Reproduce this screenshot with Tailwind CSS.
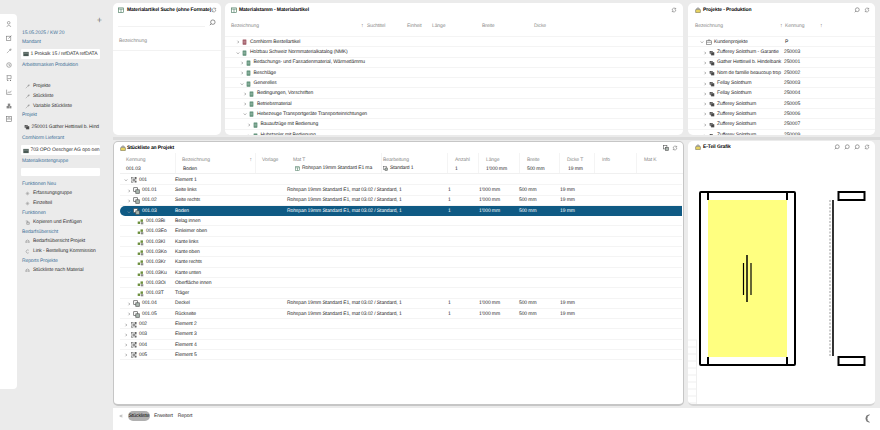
<!DOCTYPE html>
<html lang="de">
<head>
  <meta charset="UTF-8">
  <title>Stückliste an Projekt</title>
  <script src="https://cdn.jsdelivr.net/npm/@tailwindcss/browser@4"></script>
</head>
<body class="m-0">
<svg width="0" height="0" class="absolute">
  <symbol id="cr" viewBox="0 0 8 8"><path d="M3 1.500 5.500 4 3 6.500" fill="none" stroke="#555" stroke-width="1"/></symbol>
  <symbol id="cd" viewBox="0 0 8 8"><path d="M1.500 3 4 5.500 6.500 3" fill="none" stroke="#555" stroke-width="1"/></symbol>
  <symbol id="bag" viewBox="0 0 10 10"><path d="M3 4V2.500Q5 .5 7 2.500V4" fill="none" stroke="#444" stroke-width="1"/><rect x="1" y="4" width="8" height="5.500" rx=".8" fill="#e6d260" stroke="#555" stroke-width=".8"/></symbol>
  <symbol id="tbl" viewBox="0 0 10 10"><rect x="1" y="1.500" width="8" height="7.500" fill="#fff" stroke="#3f7357" stroke-width="1"/><path d="M1 3.500H9M5 3.500V9" stroke="#3f7357" stroke-width="1"/></symbol>
  <symbol id="gb" viewBox="0 0 6 8"><rect x=".5" y=".5" width="5" height="7" rx=".6" fill="#5f9078"/><path d="M1.500 3H4.500M1.500 5H4.500" stroke="#d5e4dc" stroke-width=".6"/></symbol>
  <symbol id="rb" viewBox="0 0 6 8"><rect x=".5" y=".5" width="5" height="7" rx=".6" fill="#a05a66"/><path d="M1.500 3H4.500M1.500 5H4.500" stroke="#e6ccd0" stroke-width=".6"/></symbol>
  <symbol id="prj" viewBox="0 0 10 10"><rect x="1" y="1.500" width="5.500" height="5" rx="1" fill="#555"/><rect x="3" y="3.500" width="6" height="5.500" rx="1" fill="#444" stroke="#fff" stroke-width=".6"/></symbol>
  <symbol id="kp" viewBox="0 0 10 10"><path d="M3.500 3V1.500H6.500V3" fill="none" stroke="#555" stroke-width=".8"/><rect x="1" y="3" width="8" height="6" fill="none" stroke="#555" stroke-width=".9"/><path d="M1 5.500H9" stroke="#555" stroke-width=".8"/></symbol>
  <symbol id="pt" viewBox="0 0 10 10"><rect x="1" y="1" width="5.500" height="5.500" fill="#fff" stroke="#555" stroke-width="1"/><rect x="4" y="4" width="5" height="5" fill="#aab8b0" stroke="#555" stroke-width="1"/></symbol>
  <symbol id="el" viewBox="0 0 10 10"><path d="M2.500 2.500 7.500 7.500M7.500 2.500 2.500 7.500" stroke="#555" stroke-width="1"/><g fill="#fff" stroke="#555" stroke-width=".8"><rect x="1" y="1" width="2.500" height="2.500"/><rect x="6.500" y="1" width="2.500" height="2.500"/><rect x="1" y="6.500" width="2.500" height="2.500"/><rect x="6.500" y="6.500" width="2.500" height="2.500"/></g></symbol>
  <symbol id="lf" viewBox="0 0 10 10"><rect x="1" y="5" width="3.500" height="3.500" fill="#6c8f3c"/><rect x="5" y="2" width="3.500" height="3.500" fill="#6c8f3c"/><rect x="5.500" y="6" width="3.500" height="3" fill="#888"/></symbol>
  <symbol id="rf" viewBox="0 0 10 10"><path d="M2 5A3 3 0 0 1 7.500 3.200M8 5A3 3 0 0 1 2.500 6.800" fill="none" stroke="#555" stroke-width=".8"/><path d="M7.800 1.500V3.500H5.800M2.200 8.500V6.500H4.200" fill="none" stroke="#555" stroke-width=".8"/></symbol>
  <symbol id="sr" viewBox="0 0 10 10"><circle cx="5.500" cy="4.500" r="3.200" fill="none" stroke="#555" stroke-width=".9"/><path d="M3.200 6.800 1.200 8.800" stroke="#555" stroke-width="1"/></symbol>
  <symbol id="wr" viewBox="0 0 10 10"><path d="M1.500 8.500 6 4M6 4Q5.500 1.800 8 1.500L6.800 3 7.300 3.500 8.800 2.300Q8.500 4.800 6 4" fill="none" stroke="#888" stroke-width=".9"/></symbol>
  <symbol id="gr" viewBox="0 0 10 10"><circle cx="5" cy="5" r="2" fill="#aaa"/><path d="M5 1V9M1 5H9M2.200 2.200 7.800 7.800M7.800 2.200 2.200 7.800" stroke="#aaa" stroke-width=".8"/></symbol>
  <symbol id="cp" viewBox="0 0 10 10"><path d="M1.500 2H5.500V5M3.500 4.500H8.500V8.500H3.500Z" fill="none" stroke="#666" stroke-width=".9"/></symbol>
  <symbol id="cart" viewBox="0 0 10 10"><path d="M2 8V3.500Q5 .5 8 3.500V8M1.500 6H8.500" fill="none" stroke="#777" stroke-width=".9"/></symbol>
  <symbol id="lnk" viewBox="0 0 10 10"><path d="M7.500 2.500A3.200 3.200 0 1 0 7.500 7.500" fill="none" stroke="#777" stroke-width=".9"/></symbol>
  <symbol id="sheet" viewBox="0 0 10 10"><rect x=".5" y="1.500" width="9" height="7" fill="#4a5a55"/><path d="M1.500 3.500H8.500" stroke="#cfd8d4" stroke-width=".7"/></symbol>
</svg>

<div class="w-[880px] h-[430px] overflow-hidden flex bg-[#ebebeb] text-[5px] tracking-[-0.1px] leading-none text-[#2a2a2a] [text-rendering:geometricPrecision] font-['Liberation_Sans',Arial,sans-serif]">

  <!-- icon rail -->
  <div class="w-[17px] h-[375px] mt-[14px] shrink-0 bg-white rounded-r-[4px] flex flex-col items-center pt-[7px] pl-[1px] gap-[7.600px]">
    <svg class="w-[6px] h-[6px]" viewBox="0 0 10 10"><circle cx="4.500" cy="3" r="2.200" fill="none" stroke="#777"/><path d="M1 9.500Q4.500 4.500 8.500 9.500" fill="none" stroke="#777"/></svg>
    <svg class="w-[6px] h-[6px]" viewBox="0 0 10 10"><rect x="1" y="2" width="7" height="7" fill="none" stroke="#777"/><path d="M4 6 9 1" stroke="#777"/></svg>
    <svg class="w-[6px] h-[6px]"><use href="#wr"/></svg>
    <svg class="w-[6px] h-[6px]" viewBox="0 0 10 10"><circle cx="5" cy="5" r="3.800" fill="none" stroke="#777"/><path d="M5 3V5.500H7" fill="none" stroke="#777"/></svg>
    <svg class="w-[6px] h-[6px]" viewBox="0 0 10 10"><path d="M1 1H8.500V6H2.500M2 1V8.500" fill="none" stroke="#777"/><circle cx="3" cy="9" r="1" fill="#777"/><circle cx="7.500" cy="9" r="1" fill="#777"/></svg>
    <svg class="w-[6px] h-[6px]" viewBox="0 0 10 10"><path d="M1 1V9H9.500M2.500 7 5 4.500 6.500 6 9 3" fill="none" stroke="#777"/></svg>
    <svg class="w-[6px] h-[6px]" viewBox="0 0 10 10"><rect x="3" y="1" width="4" height="4" fill="#888"/><rect x="1" y="5" width="4" height="4" fill="#888"/><rect x="5.500" y="5" width="3.500" height="4" fill="#888"/></svg>
    <svg class="w-[6px] h-[6px]" viewBox="0 0 10 10"><rect x="1" y="1" width="8" height="8" fill="none" stroke="#777"/><path d="M1 5H9M3 3H7" stroke="#777"/></svg>
  </div>

  <!-- sidebar -->
  <div class="w-[96px] shrink-0 flex flex-col pl-[5px] pr-[13px] pt-[16px] text-[#333] whitespace-nowrap">
    <div class="h-[8px] flex justify-end text-[#777] text-[9px] leading-[8px] -mr-[2px]">+</div>
    <div class="h-[9px] mt-[5px] flex items-center text-[#3f7198]">15.05.2025 / KW 20</div>
    <div class="h-[9px] flex items-center text-[#3f7198]">Mandant</div>
    <div class="h-[10px] mt-[1.500px] -ml-[1px] w-[79px] bg-white rounded-[1px] flex items-center pl-[2px] pt-[1px] gap-[1.500px]"><svg class="w-[6px] h-[6px] shrink-0"><use href="#sheet"/></svg>1 Prokalk 15 / refDATA refDATA</div>
    <div class="h-[9px] mt-[2.500px] flex items-center text-[#3f7198]">Arbeitsmasken Produktion</div>

    <div class="h-[9.700px] mt-[12px] flex items-center pl-[3px] gap-[3px]"><svg class="w-[5px] h-[5px]"><use href="#wr"/></svg>Projekte</div>
    <div class="h-[9.700px] flex items-center pl-[3px] gap-[3px]"><svg class="w-[5px] h-[5px]"><use href="#wr"/></svg>Stückliste</div>
    <div class="h-[9.700px] flex items-center pl-[3px] gap-[3px]"><svg class="w-[5px] h-[5px]"><use href="#wr"/></svg>Variable Stückliste</div>
    <div class="h-[9.300px] flex items-center text-[#3f7198]">Projekt</div>
    <div class="h-[10px] mt-[2px] flex items-center pl-[2px] gap-[1.500px] w-[79px]"><svg class="w-[6px] h-[6px] shrink-0"><use href="#prj"/></svg>250001 Gather Hettiswil b. Hind</div>
    <div class="h-[9px] mt-[1.500px] flex items-center text-[#3f7198]">ComNorm Lieferant</div>
    <div class="h-[10px] mt-[2.500px] -ml-[1px] w-[79px] bg-white rounded-[1px] flex items-center pl-[2px] pt-[1px] gap-[1.500px]"><svg class="w-[6px] h-[6px] shrink-0"><use href="#sheet"/></svg>703 OPO Oeschger AG opo oen</div>
    <div class="h-[9px] mt-[1.500px] flex items-center text-[#3f7198]">Materialkostengruppe</div>
    <div class="h-[8px] mt-[2px] -ml-[1px] w-[79px] bg-white rounded-[1px]"></div>
    <div class="h-[9px] mt-[4px] flex items-center text-[#3f7198]">Funktionen Neu</div>
    <div class="h-[9.800px] flex items-center pl-[3px] gap-[3px]"><svg class="w-[5px] h-[5px]"><use href="#gr"/></svg>Erfassungsgruppe</div>
    <div class="h-[9.800px] flex items-center pl-[3px] gap-[3px]"><svg class="w-[5px] h-[5px]"><use href="#gr"/></svg>Einzelteil</div>
    <div class="h-[9.400px] flex items-center text-[#3f7198]">Funktionen</div>
    <div class="h-[9.800px] flex items-center pl-[3px] gap-[3px]"><svg class="w-[5px] h-[5px]"><use href="#cp"/></svg>Kopieren und Einfügen</div>
    <div class="h-[9.400px] flex items-center text-[#3f7198]">Bedarfsübersicht</div>
    <div class="h-[9.800px] flex items-center pl-[3px] gap-[3px]"><svg class="w-[5px] h-[5px]"><use href="#cart"/></svg>Bedarfsübersicht Projekt</div>
    <div class="h-[9.800px] flex items-center pl-[3px] gap-[3px]"><svg class="w-[5px] h-[5px]"><use href="#lnk"/></svg>Link - Bestellung Kommission</div>
    <div class="h-[9.400px] flex items-center text-[#3f7198]">Reports Projekte</div>
    <div class="h-[9.800px] flex items-center pl-[3px] gap-[3px]"><svg class="w-[5px] h-[5px]"><use href="#cart"/></svg>Stückliste nach Material</div>
  </div>

  <!-- main -->
  <div class="w-[767px] shrink-0 flex flex-col">

    <!-- top panels -->
    <div class="h-[135px] pt-[3px] flex">
      <div class="w-[108px] h-[132px] bg-white rounded-[5px] overflow-hidden">
        <div class="h-[14px] pl-[5px] pr-[6px] flex items-center font-bold text-black whitespace-nowrap"><svg class="w-[6px] h-[6px] shrink-0 mr-[3px]"><use href="#tbl"/></svg><span class="grow">Materialartikel Suche (ohne Formate)</span><svg class="w-[6px] h-[6px] shrink-0"><use href="#rf"/></svg></div>
        <div class="h-[10px] flex justify-between items-center pl-[5px] pr-[5px]"><div class="w-[87px] h-[9px] border-b border-[#f2f2f2]"></div><svg class="w-[7px] h-[7px]"><use href="#sr"/></svg></div>
        <div class="h-[24px] pl-[6px] pt-[12px] text-[#8a8a8a] border-b border-[#f2f2f2]">Bezeichnung</div>
      </div>

      <div class="w-[458px] h-[132px] ml-[4px] bg-white rounded-[5px] overflow-hidden">
        <div class="h-[14px] pl-[6px] pr-[6px] flex items-center justify-between font-bold text-black"><span class="flex items-center gap-[2px]"><svg class="w-[6px] h-[6px]"><use href="#tbl"/></svg>Materialstamm - Materialartikel</span><svg class="w-[6px] h-[6px]"><use href="#rf"/></svg></div>
        <div class="h-[20px] pl-[6px] flex items-center text-[#8a8a8a] border-b border-[#f4f4f4]">
          <span class="w-[130px]">Bezeichnung</span><span class="w-[6px] text-[#666]">↑</span><span class="w-[40px]">Suchtitel</span><span class="w-[25px]">Einheit</span><span class="w-[50px]">Länge</span><span class="w-[52px]">Breite</span><span>Dicke</span>
        </div>
        <div class="flex items-center h-[10.300px] pt-[1.500px] pl-[11px] border-b border-[#f4f4f4]"><svg class="w-[4px] h-[4px] mr-[2px]"><use href="#cr"/></svg><svg class="w-[5px] h-[6px] mr-[3px]"><use href="#rb"/></svg>ComNorm Bestellartikel</div>
        <div class="flex items-center h-[10.300px] pt-[1.500px] pl-[11px] border-b border-[#f4f4f4]"><svg class="w-[4px] h-[4px] mr-[2px]"><use href="#cd"/></svg><svg class="w-[5px] h-[6px] mr-[3px]"><use href="#gb"/></svg>Holzbau Schweiz Normmaterialkatalog (NMK)</div>
        <div class="flex items-center h-[10.300px] pt-[1.500px] pl-[14.500px] border-b border-[#f4f4f4]"><svg class="w-[4px] h-[4px] mr-[2px]"><use href="#cr"/></svg><svg class="w-[5px] h-[6px] mr-[3px]"><use href="#gb"/></svg>Bedachungs- und Fassadenmaterial, Wärmedämmu</div>
        <div class="flex items-center h-[10.300px] pt-[1.500px] pl-[14.500px] border-b border-[#f4f4f4]"><svg class="w-[4px] h-[4px] mr-[2px]"><use href="#cr"/></svg><svg class="w-[5px] h-[6px] mr-[3px]"><use href="#gb"/></svg>Beschläge</div>
        <div class="flex items-center h-[10.300px] pt-[1.500px] pl-[14.500px] border-b border-[#f4f4f4]"><svg class="w-[4px] h-[4px] mr-[2px]"><use href="#cd"/></svg><svg class="w-[5px] h-[6px] mr-[3px]"><use href="#gb"/></svg>Generelles</div>
        <div class="flex items-center h-[10.300px] pt-[1.500px] pl-[18px] border-b border-[#f4f4f4]"><svg class="w-[4px] h-[4px] mr-[2px]"><use href="#cr"/></svg><svg class="w-[5px] h-[6px] mr-[3px]"><use href="#gb"/></svg>Bedingungen, Vorschriften</div>
        <div class="flex items-center h-[10.300px] pt-[1.500px] pl-[18px] border-b border-[#f4f4f4]"><svg class="w-[4px] h-[4px] mr-[2px]"><use href="#cr"/></svg><svg class="w-[5px] h-[6px] mr-[3px]"><use href="#gb"/></svg>Betriebsmaterial</div>
        <div class="flex items-center h-[10.300px] pt-[1.500px] pl-[18px] border-b border-[#f4f4f4]"><svg class="w-[4px] h-[4px] mr-[2px]"><use href="#cd"/></svg><svg class="w-[5px] h-[6px] mr-[3px]"><use href="#gb"/></svg>Hebezeuge Transportgeräte Transporteinrichtungen</div>
        <div class="flex items-center h-[10.300px] pt-[1.500px] pl-[21.500px] border-b border-[#f4f4f4]"><svg class="w-[4px] h-[4px] mr-[2px]"><use href="#cr"/></svg><svg class="w-[5px] h-[6px] mr-[3px]"><use href="#gb"/></svg>Bauaufzüge mit Bedienung</div>
        <div class="flex items-center h-[10.300px] pt-[1.500px] pl-[21.500px]"><svg class="w-[4px] h-[4px] mr-[2px]"><use href="#cr"/></svg><svg class="w-[5px] h-[6px] mr-[3px]"><use href="#gb"/></svg>Hubstapler mit Bedienung</div>
      </div>

      <div class="w-[187px] h-[132px] ml-[5px] bg-white rounded-[5px] overflow-hidden">
        <div class="h-[14px] pl-[7px] pr-[5px] flex items-center justify-between font-bold text-black"><span class="flex items-center gap-[2px]"><svg class="w-[6px] h-[6px]"><use href="#bag"/></svg>Projekte - Produktion</span><span class="flex gap-[4px]"><svg class="w-[6px] h-[6px]"><use href="#sr"/></svg><svg class="w-[6px] h-[6px]"><use href="#rf"/></svg></span></div>
        <div class="h-[20px] pl-[7px] flex items-center text-[#8a8a8a] border-b border-[#f4f4f4]"><span class="w-[85px]">Bezeichnung</span><span class="w-[5px] text-[#666]">↑</span><span class="w-[35px]">Kennung</span><span class="text-[#666]">↑</span></div>
        <div class="flex items-center h-[10.300px] pt-[1.500px] pl-[12px] border-b border-[#f4f4f4]"><svg class="w-[4px] h-[4px] mr-[2px] shrink-0"><use href="#cd"/></svg><svg class="w-[6px] h-[6px] mr-[2px] shrink-0"><use href="#kp"/></svg><span class="w-[71px]">Kundenprojekte</span><span>P</span></div>
        <div class="flex items-center h-[10.300px] pt-[1.500px] pl-[15px] border-b border-[#f4f4f4]"><svg class="w-[4px] h-[4px] mr-[2px] shrink-0"><use href="#cr"/></svg><svg class="w-[6px] h-[6px] mr-[2px] shrink-0"><use href="#prj"/></svg><span class="w-[67px] whitespace-nowrap">Zufferey Solothurn - Garantie</span><span>250003</span></div>
        <div class="flex items-center h-[10.300px] pt-[1.500px] pl-[15px] border-b border-[#f4f4f4]"><svg class="w-[4px] h-[4px] mr-[2px] shrink-0"><use href="#cr"/></svg><svg class="w-[6px] h-[6px] mr-[2px] shrink-0"><use href="#prj"/></svg><span class="w-[67px] whitespace-nowrap">Gather Hettiswil b. Hindelbank</span><span>250001</span></div>
        <div class="flex items-center h-[10.300px] pt-[1.500px] pl-[15px] border-b border-[#f4f4f4]"><svg class="w-[4px] h-[4px] mr-[2px] shrink-0"><use href="#cr"/></svg><svg class="w-[6px] h-[6px] mr-[2px] shrink-0"><use href="#prj"/></svg><span class="w-[67px] whitespace-nowrap">Nom de famille beaucoup trop</span><span>250002</span></div>
        <div class="flex items-center h-[10.300px] pt-[1.500px] pl-[15px] border-b border-[#f4f4f4]"><svg class="w-[4px] h-[4px] mr-[2px] shrink-0"><use href="#cr"/></svg><svg class="w-[6px] h-[6px] mr-[2px] shrink-0"><use href="#prj"/></svg><span class="w-[67px]">Fellay Solothurn</span><span>250003</span></div>
        <div class="flex items-center h-[10.300px] pt-[1.500px] pl-[15px] border-b border-[#f4f4f4]"><svg class="w-[4px] h-[4px] mr-[2px] shrink-0"><use href="#cr"/></svg><svg class="w-[6px] h-[6px] mr-[2px] shrink-0"><use href="#prj"/></svg><span class="w-[67px]">Fellay Solothurn</span><span>250004</span></div>
        <div class="flex items-center h-[10.300px] pt-[1.500px] pl-[15px] border-b border-[#f4f4f4]"><svg class="w-[4px] h-[4px] mr-[2px] shrink-0"><use href="#cr"/></svg><svg class="w-[6px] h-[6px] mr-[2px] shrink-0"><use href="#prj"/></svg><span class="w-[67px]">Zufferey Solothurn</span><span>250005</span></div>
        <div class="flex items-center h-[10.300px] pt-[1.500px] pl-[15px] border-b border-[#f4f4f4]"><svg class="w-[4px] h-[4px] mr-[2px] shrink-0"><use href="#cr"/></svg><svg class="w-[6px] h-[6px] mr-[2px] shrink-0"><use href="#prj"/></svg><span class="w-[67px]">Zufferey Solothurn</span><span>250006</span></div>
        <div class="flex items-center h-[10.300px] pt-[1.500px] pl-[15px] border-b border-[#f4f4f4]"><svg class="w-[4px] h-[4px] mr-[2px] shrink-0"><use href="#cr"/></svg><svg class="w-[6px] h-[6px] mr-[2px] shrink-0"><use href="#prj"/></svg><span class="w-[67px]">Zufferey Solothurn</span><span>250007</span></div>
        <div class="flex items-center h-[10.300px] pt-[1.500px] pl-[15px]"><svg class="w-[4px] h-[4px] mr-[2px] shrink-0"><use href="#cr"/></svg><svg class="w-[6px] h-[6px] mr-[2px] shrink-0"><use href="#prj"/></svg><span class="w-[67px]">Zufferey Solothurn</span><span>250009</span></div>
      </div>
    </div>

    <!-- splitter -->
    <div class="h-[6px] flex items-center"><div class="w-full h-[3px] bg-[#dcdcdc]"></div></div>

    <!-- lower panels -->
    <div class="h-[265px] flex">
      <div class="w-[571px] bg-white rounded-[5px] border border-[#c6c6c6] border-b-2 overflow-hidden shrink-0">
        <div class="h-[11px] pl-[6px] pr-[5px] pt-[1px] flex items-center justify-between font-bold text-black"><span class="flex items-center gap-[1px]"><svg class="w-[6px] h-[6px]"><use href="#bag"/></svg>Stückliste an Projekt</span><span class="flex gap-[3px]"><svg class="w-[6px] h-[6px]"><use href="#pt"/></svg><svg class="w-[6px] h-[6px]"><use href="#rf"/></svg></span></div>
        <div class="h-[21px] ml-[6px] flex text-[#8a8a8a] border-b border-[#f0f0f0]">
          <div class="w-[56px] pl-[6px] pt-[5px] border-r border-[#f4f4f4]">Kennung<div class="text-[#2a2a2a] mt-[4px]">001.03</div></div>
          <div class="w-[80px] pl-[6px] pt-[5px] border-r border-[#f4f4f4] flex justify-between pr-[3px]"><div>Bezeichnung<div class="text-[#2a2a2a] mt-[4px] ml-[1px]">Boden</div></div><span class="text-[#666]">↑</span></div>
          <div class="w-[36px] pl-[6px] pt-[5px]">Vorlage</div>
          <div class="w-[90px] pl-[1px] pt-[5px] border-r border-[#f4f4f4] whitespace-nowrap">Mat T<div class="text-[#2a2a2a] mt-[3px] flex items-center gap-[2px] ml-[2px]"><svg class="w-[5px] h-[5px]"><use href="#tbl"/></svg>Rohspan 19mm Standard E1 ma</div></div>
          <div class="w-[66px] pl-[1px] pt-[5px] border-r border-[#f4f4f4]">Bearbeitung<div class="text-[#2a2a2a] mt-[3px] flex items-center gap-[2px]"><svg class="w-[5px] h-[5px]"><use href="#pt"/></svg>Standard 1</div></div>
          <div class="w-[31px] pl-[7px] pt-[5px] border-r border-[#f4f4f4]">Anzahl<div class="text-[#2a2a2a] mt-[4px]">1</div></div>
          <div class="w-[41px] pl-[7px] pt-[5px] border-r border-[#f4f4f4]">Länge<div class="text-[#2a2a2a] mt-[4px]">1'000 mm</div></div>
          <div class="w-[40px] pl-[7px] pt-[5px] border-r border-[#f4f4f4]">Breite<div class="text-[#2a2a2a] mt-[4px]">500 mm</div></div>
          <div class="w-[35px] pl-[7px] pt-[5px] border-r border-[#f4f4f4]">Dicke T<div class="text-[#2a2a2a] mt-[4px] ml-[1px]">19 mm</div></div>
          <div class="w-[42px] pl-[7px] pt-[5px] border-r border-[#f4f4f4]">Info</div>
          <div class="pl-[7px] pt-[5px]">Mat K</div>
        </div>

        <div class="ml-[6px] mr-[1px] mt-[1px]">
          <div class="flex items-center h-[10.300px] pt-[1.500px] border-b border-[#f4f4f4]"><div class="w-[55px] flex items-center pl-[4px]"><svg class="w-[4px] h-[4px] mr-[3px]"><use href="#cd"/></svg><svg class="w-[6px] h-[6px] mr-[2px]"><use href="#el"/></svg>001</div>Element 1</div>
          <div class="grid grid-cols-[55px_112px_161px_31px_40px_41px_1fr] items-center h-[10.300px] pt-[1.500px] border-b border-[#f4f4f4]"><div class="flex items-center pl-[7px]"><svg class="w-[4px] h-[4px] mr-[2px]"><use href="#cr"/></svg><svg class="w-[7px] h-[7px] mr-[2px]"><use href="#pt"/></svg>001.01</div><div>Seite links</div><div>Rohspan 19mm Standard E1, mat 03.02 / Standard, 1</div><div>1</div><div>1'000 mm</div><div>500 mm</div><div>19 mm</div></div>
          <div class="grid grid-cols-[55px_112px_161px_31px_40px_41px_1fr] items-center h-[10.300px] pt-[1.500px] border-b border-[#f4f4f4]"><div class="flex items-center pl-[7px]"><svg class="w-[4px] h-[4px] mr-[2px]"><use href="#cr"/></svg><svg class="w-[7px] h-[7px] mr-[2px]"><use href="#pt"/></svg>001.02</div><div>Seite rechts</div><div>Rohspan 19mm Standard E1, mat 03.02 / Standard, 1</div><div>1</div><div>1'000 mm</div><div>500 mm</div><div>19 mm</div></div>
          <div class="grid grid-cols-[55px_112px_161px_31px_40px_41px_1fr] items-center h-[10.300px] pt-[1.500px] bg-[#0f5a84] text-white rounded-l-full"><div class="flex items-center pl-[7px]"><svg class="w-[4px] h-[4px] mr-[2px] invert"><use href="#cd"/></svg><svg class="w-[7px] h-[7px] mr-[2px]"><use href="#pt"/></svg>001.03</div><div>Boden</div><div>Rohspan 19mm Standard E1, mat 03.02 / Standard, 1</div><div>1</div><div>1'000 mm</div><div>500 mm</div><div>19 mm</div></div>
          <div class="flex items-center h-[10.300px] pt-[1.500px] border-b border-[#f4f4f4]"><div class="w-[55px] flex items-center pl-[17px]"><svg class="w-[7px] h-[7px] mr-[2px]"><use href="#lf"/></svg>001.03Bi</div>Belag innen</div>
          <div class="flex items-center h-[10.300px] pt-[1.500px] border-b border-[#f4f4f4]"><div class="w-[55px] flex items-center pl-[17px]"><svg class="w-[7px] h-[7px] mr-[2px]"><use href="#lf"/></svg>001.03Eo</div>Einleimer oben</div>
          <div class="flex items-center h-[10.300px] pt-[1.500px] border-b border-[#f4f4f4]"><div class="w-[55px] flex items-center pl-[17px]"><svg class="w-[7px] h-[7px] mr-[2px]"><use href="#lf"/></svg>001.03Kl</div>Kante links</div>
          <div class="flex items-center h-[10.300px] pt-[1.500px] border-b border-[#f4f4f4]"><div class="w-[55px] flex items-center pl-[17px]"><svg class="w-[7px] h-[7px] mr-[2px]"><use href="#lf"/></svg>001.03Ko</div>Kante oben</div>
          <div class="flex items-center h-[10.300px] pt-[1.500px] border-b border-[#f4f4f4]"><div class="w-[55px] flex items-center pl-[17px]"><svg class="w-[7px] h-[7px] mr-[2px]"><use href="#lf"/></svg>001.03Kr</div>Kante rechts</div>
          <div class="flex items-center h-[10.300px] pt-[1.500px] border-b border-[#f4f4f4]"><div class="w-[55px] flex items-center pl-[17px]"><svg class="w-[7px] h-[7px] mr-[2px]"><use href="#lf"/></svg>001.03Ku</div>Kante unten</div>
          <div class="flex items-center h-[10.300px] pt-[1.500px] border-b border-[#f4f4f4]"><div class="w-[55px] flex items-center pl-[17px]"><svg class="w-[7px] h-[7px] mr-[2px]"><use href="#lf"/></svg>001.03Oi</div>Oberfläche innen</div>
          <div class="flex items-center h-[10.300px] pt-[1.500px] border-b border-[#f4f4f4]"><div class="w-[55px] flex items-center pl-[17px]"><svg class="w-[7px] h-[7px] mr-[2px]"><use href="#lf"/></svg>001.03T</div>Träger</div>
          <div class="grid grid-cols-[55px_112px_161px_31px_40px_41px_1fr] items-center h-[10.300px] pt-[1.500px] border-b border-[#f4f4f4]"><div class="flex items-center pl-[7px]"><svg class="w-[4px] h-[4px] mr-[2px]"><use href="#cr"/></svg><svg class="w-[7px] h-[7px] mr-[2px]"><use href="#pt"/></svg>001.04</div><div>Deckel</div><div>Rohspan 19mm Standard E1, mat 03.02 / Standard, 1</div><div>1</div><div>1'000 mm</div><div>500 mm</div><div>19 mm</div></div>
          <div class="grid grid-cols-[55px_112px_161px_31px_40px_41px_1fr] items-center h-[10.300px] pt-[1.500px] border-b border-[#f4f4f4]"><div class="flex items-center pl-[7px]"><svg class="w-[4px] h-[4px] mr-[2px]"><use href="#cr"/></svg><svg class="w-[7px] h-[7px] mr-[2px]"><use href="#pt"/></svg>001.05</div><div>Rückseite</div><div>Rohspan 19mm Standard E1, mat 03.02 / Standard, 1</div><div>1</div><div>1'000 mm</div><div>500 mm</div><div>19 mm</div></div>
          <div class="flex items-center h-[10.300px] pt-[1.500px] border-b border-[#f4f4f4]"><div class="w-[55px] flex items-center pl-[4px]"><svg class="w-[4px] h-[4px] mr-[3px]"><use href="#cr"/></svg><svg class="w-[6px] h-[6px] mr-[2px]"><use href="#el"/></svg>002</div>Element 2</div>
          <div class="flex items-center h-[10.300px] pt-[1.500px] border-b border-[#f4f4f4]"><div class="w-[55px] flex items-center pl-[4px]"><svg class="w-[4px] h-[4px] mr-[3px]"><use href="#cr"/></svg><svg class="w-[6px] h-[6px] mr-[2px]"><use href="#el"/></svg>003</div>Element 3</div>
          <div class="flex items-center h-[10.300px] pt-[1.500px] border-b border-[#f4f4f4]"><div class="w-[55px] flex items-center pl-[4px]"><svg class="w-[4px] h-[4px] mr-[3px]"><use href="#cr"/></svg><svg class="w-[6px] h-[6px] mr-[2px]"><use href="#el"/></svg>004</div>Element 4</div>
          <div class="flex items-center h-[10.300px] pt-[1.500px] border-b border-[#f4f4f4]"><div class="w-[55px] flex items-center pl-[4px]"><svg class="w-[4px] h-[4px] mr-[3px]"><use href="#cr"/></svg><svg class="w-[6px] h-[6px] mr-[2px]"><use href="#el"/></svg>005</div>Element 5</div>
        </div>
      </div>

      <div class="w-[187px] ml-[4px] bg-white rounded-[5px] border-b-2 border-[#d4d4d4] relative overflow-hidden shrink-0">
        <div class="h-[11px] pl-[7px] pr-[5px] pt-[1px] flex items-center justify-between font-bold text-black"><span class="flex items-center gap-[2px]"><svg class="w-[6px] h-[6px]"><use href="#bag"/></svg>E-Teil Grafik</span><span class="flex gap-[4px]"><svg class="w-[6px] h-[6px]"><use href="#sr"/></svg><svg class="w-[6px] h-[6px]"><use href="#sr"/></svg><svg class="w-[6px] h-[6px]"><use href="#sr"/></svg><svg class="w-[6px] h-[6px]"><use href="#rf"/></svg></span></div>
        <!-- drawing: coordinates are page x-688 y-141 -->
        <svg class="absolute left-0 top-0" width="187" height="263" viewBox="0 0 187 263">
          <rect x="20" y="59" width="79" height="157" fill="#ffff80"/>
          <rect x="12" y="51" width="95" height="173" rx="1" fill="none" stroke="#000" stroke-width="2"/>
          <path d="M20 51V59M99 51V59M20 216V224M99 216V224" stroke="#000" stroke-width="2"/>
          <path d="M59 114V161" stroke="#000" stroke-width="1.500"/>
          <path d="M55.500 122V154M63 122V154" stroke="#000" stroke-width="1.200"/>
          <rect x="150.500" y="51" width="26" height="8" fill="#fff" stroke="#000" stroke-width="2"/>
          <rect x="150.500" y="216" width="26" height="8" fill="#fff" stroke="#000" stroke-width="2"/>
          <path d="M145 59V215" stroke="#000" stroke-width="1.600"/>
          <path d="M142 59V216" stroke="#999" stroke-width="1" stroke-dasharray="2 1.500"/>
          <path d="M0 199H9M0 206H9M0 213H9M0 220H9M0 227H9M0 234H9M0 241H9M0 248H9M0 255H9M0 262H9" stroke="#efefef" stroke-width="1"/>
          <path d="M8.500 199V263" stroke="#efefef" stroke-width="1"/>
        </svg>
      </div>
    </div>

    <!-- bottom tabs -->
    <div class="h-[22px] mt-[2px] bg-white pl-[6px] pr-[9px] pt-[3px] flex items-start justify-between">
      <div class="flex items-center h-[10px]">
        <svg class="w-[4px] h-[4px] mr-[5px]" viewBox="0 0 8 8"><path d="M4 1.500 1.500 4 4 6.500M7 1.500 4.500 4 7 6.500" fill="none" stroke="#666"/></svg>
        <span class="h-[10px] w-[22px] pt-[1px] bg-[#b0b0b0] rounded-full flex items-center justify-center text-black">Stückliste</span>
        <span class="ml-[4px] pt-[1px]">Erweitert</span>
        <span class="ml-[5px] pt-[1px]">Report</span>
      </div>
      <svg class="w-[7px] h-[9px] mt-[3px]" viewBox="0 0 7 9"><path d="M5.500 .8A4 4 0 0 0 5.500 8.200A3 3 0 0 1 5.500 .8Z" fill="#777" stroke="#777" stroke-width=".6"/></svg>
    </div>
  </div>
</div>
</body>
</html>
